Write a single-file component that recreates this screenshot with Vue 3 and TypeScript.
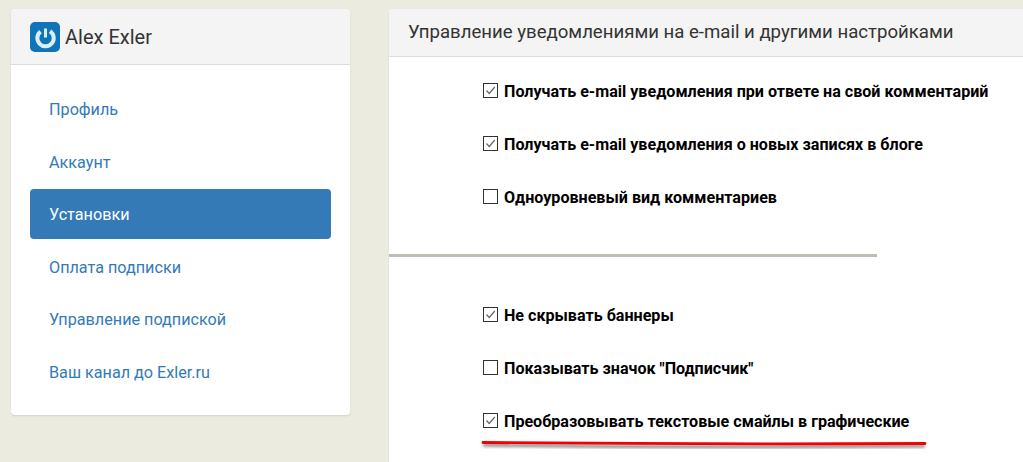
<script setup lang="ts">
const nav = [
  { label: 'Профиль' },
  { label: 'Аккаунт' },
  { label: 'Установки', active: true },
  { label: 'Оплата подписки' },
  { label: 'Управление подпиской' },
  { label: 'Ваш канал до Exler.ru' },
]

const notifications = [
  { label: 'Получать e-mail уведомления при ответе на свой комментарий', checked: true },
  { label: 'Получать e-mail уведомления о новых записях в блоге', checked: true },
  { label: 'Одноуровневый вид комментариев', checked: false },
]

const display = [
  { label: 'Не скрывать баннеры', checked: true },
  { label: 'Показывать значок "Подписчик"', checked: false },
  { label: 'Преобразовывать текстовые смайлы в графические', checked: true, marked: true },
]
</script>

<template>
  <div class="page">
    <aside class="card side">
      <header class="side-head">
        <svg class="logo" width="30" height="30" viewBox="0 0 30 30">
          <defs>
            <filter id="soft"><feGaussianBlur stdDeviation="0.5" /></filter>
          </defs>
          <rect width="30" height="30" rx="5" fill="#0f75b8" />
          <g filter="url(#soft)">
            <path d="M10.5 9.6 A8.2 8.2 0 1 0 20 9.2" fill="none" stroke="#dceef5" stroke-width="4" />
            <path d="M15.5 6.5 V15.5" stroke="#dceef5" stroke-width="3" />
          </g>
        </svg>
        <span>Alex Exler</span>
      </header>
      <nav class="nav">
        <a v-for="item in nav" :key="item.label" class="nav-item" :class="{ active: item.active }">{{ item.label }}</a>
      </nav>
    </aside>

    <main class="card content">
      <header class="content-head">Управление уведомлениями на e-mail и другими настройками</header>
      <section class="group first">
        <label v-for="row in notifications" :key="row.label" class="row">
          <span class="box">
            <svg v-if="row.checked" width="13" height="13" viewBox="0 0 13 13">
              <path d="M2.5 6.5 L5.2 9.5 L10.8 3" fill="none" stroke="#666" stroke-width="1.2" />
            </svg>
          </span>
          {{ row.label }}
        </label>
      </section>
      <hr class="divider" />
      <section class="group">
        <label v-for="row in display" :key="row.label" class="row">
          <span class="box">
            <svg v-if="row.checked" width="13" height="13" viewBox="0 0 13 13">
              <path d="M2.5 6.5 L5.2 9.5 L10.8 3" fill="none" stroke="#666" stroke-width="1.2" />
            </svg>
          </span>
          {{ row.label }}
          <svg v-if="row.marked" class="mark" width="456" height="20" viewBox="0 0 456 20">
            <defs>
              <filter id="blur" x="-5%" y="-100%" width="110%" height="300%">
                <feGaussianBlur stdDeviation="1.5" />
              </filter>
            </defs>
            <path d="M3 13 Q 220 16 445 14" fill="none" stroke="#444" stroke-width="3" opacity="0.65" filter="url(#blur)" />
            <path d="M3 10.5 Q 220 12.5 445 11.5" fill="none" stroke="#f40000" stroke-width="2.8" stroke-linecap="round" />
          </svg>
        </label>
      </section>
    </main>
  </div>
</template>

<style scoped>
.page {
  display: grid;
  grid-template-columns: 339px 1fr;
  column-gap: 39px;
  align-items: start;
  height: 462px;
  padding: 9px 0 0 11px;
  box-sizing: border-box;
  background: #ebebdf;
  overflow: hidden;
  font-family: Roboto, 'Noto Sans', sans-serif;
}
.card {
  background: #fff;
  border-radius: 4px;
  box-shadow: 0 1px 2px rgba(0, 0, 0, 0.1);
}
.side {
  height: 406px;
}
.side-head {
  display: flex;
  align-items: center;
  gap: 5px;
  height: 55px;
  padding-left: 19px;
  background: #f4f4f4;
  border-bottom: 1px solid #ddd;
  border-radius: 4px 4px 0 0;
  font-size: 20px;
  color: #333;
}
.logo {
  flex: none;
}
.nav {
  display: flex;
  flex-direction: column;
  gap: 2.5px;
  padding: 19px 19px 0;
}
.nav-item {
  height: 50px;
  line-height: 51px;
  padding-left: 19px;
  border-radius: 4px;
  font-size: 16.2px;
  color: #337ab7;
}
.nav-item.active {
  background: #337ab7;
  color: #fff;
}
.content {
  height: 470px;
  border-radius: 4px 0 0 0;
}
.content-head {
  height: 47px;
  line-height: 47px;
  padding-left: 19px;
  background: #f4f4f4;
  border-bottom: 1px solid #ddd;
  border-radius: 4px 0 0 0;
  font-size: 18.6px;
  color: #333;
}
.group {
  display: flex;
  flex-direction: column;
  gap: 31px;
  padding-left: 94px;
}
.group.first {
  padding-top: 23px;
}
.row {
  position: relative;
  display: flex;
  align-items: center;
  gap: 6px;
  height: 22px;
  font-size: 16.1px;
  font-weight: 700;
  color: #000;
  white-space: nowrap;
}
.box {
  flex: none;
  width: 13px;
  height: 13px;
  border: 1px solid #333;
  display: block;
  margin-top: -2px;
}
.box svg {
  display: block;
}
.divider {
  width: 488px;
  height: 3px;
  margin: 46px 0 47px;
  border: 0;
  background: #bebeb4;
}
.mark {
  position: absolute;
  left: -3px;
  top: 22px;
  overflow: visible;
}
</style>

<style>
html,
body {
  margin: 0;
  background: #ebebdf;
}
</style>
